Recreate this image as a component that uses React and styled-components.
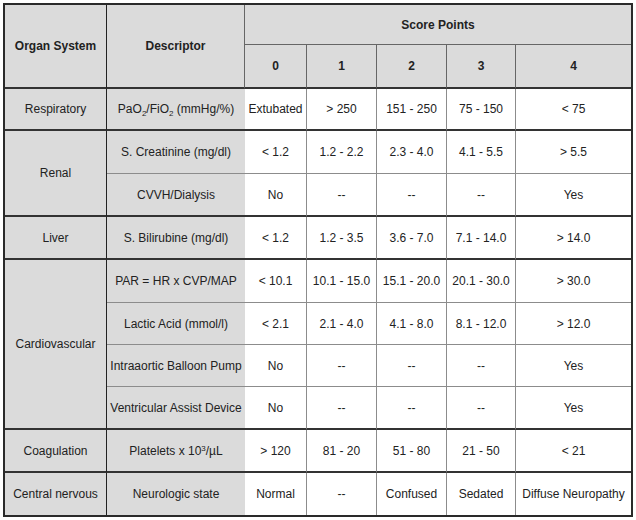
import React from "react";
import styled, { createGlobalStyle } from "styled-components";

const Global = createGlobalStyle`
  html, body { margin: 0; padding: 0; background: #fff; }
  body { font-family: "Liberation Sans", Arial, sans-serif; }
`;

const Page = styled.div`
  padding: 3px 0 0 3px;
  width: 636px;
  height: 520px;
  box-sizing: border-box;
  background: #fff;
`;

const Grid = styled.div`
  display: inline-grid;
  grid-template-columns: 102px 138px 62px 70px 70px 69px 115px;
  grid-template-rows: 40px 44px 42px 43px 43px 43px 43px 42px 42px 43px 43px 42px;
  border: 2px solid #2a2a2a;
  color: #222;
  font-size: 12px;
`;

const Cell = styled.div`
  box-sizing: border-box;
  display: flex;
  align-items: center;
  justify-content: center;
  text-align: center;
  white-space: nowrap;
  padding: 0 1px;
  background: ${(p) => (p.$shade ? "#dbdbdb" : "#fff")};
  font-weight: ${(p) => (p.$bold ? 700 : 400)};
  grid-row: ${(p) => (p.$rows ? `span ${p.$rows}` : "auto")};
  grid-column: ${(p) => (p.$cols ? `span ${p.$cols}` : "auto")};
  border-right: ${(p) => p.$right || "none"};
  border-bottom: ${(p) => p.$bottom || "none"};
`;

const Text = styled.span`
  display: inline-block;
`;

const Sub = styled.span`
  font-size: 8px;
  position: relative;
  top: 3px;
`;

const Sup = styled.span`
  font-size: 8px;
  position: relative;
  top: -4px;
`;

const DARK = "1px solid #222";
const GROUP = "2px solid #333";
const MID = "1px solid #666";
const LIGHT = "1px solid #8c8c8c";

const groups = [
  {
    organ: "Respiratory",
    rows: [
      {
        desc: (
          <Text>
            PaO<Sub>2</Sub>/FiO<Sub>2</Sub>{" "}(mmHg/%)
          </Text>
        ),
        vals: ["Extubated", "> 250", "151 - 250", "75 - 150", "< 75"],
      },
    ],
  },
  {
    organ: "Renal",
    rows: [
      { desc: "S. Creatinine (mg/dl)", vals: ["< 1.2", "1.2 - 2.2", "2.3 - 4.0", "4.1 - 5.5", "> 5.5"] },
      { desc: "CVVH/Dialysis", vals: ["No", "--", "--", "--", "Yes"] },
    ],
  },
  {
    organ: "Liver",
    rows: [
      { desc: "S. Bilirubine (mg/dl)", vals: ["< 1.2", "1.2 - 3.5", "3.6 - 7.0", "7.1 - 14.0", "> 14.0"] },
    ],
  },
  {
    organ: "Cardiovascular",
    rows: [
      { desc: "PAR = HR x CVP/MAP", vals: ["< 10.1", "10.1 - 15.0", "15.1 - 20.0", "20.1 - 30.0", "> 30.0"] },
      { desc: "Lactic Acid (mmol/l)", vals: ["< 2.1", "2.1 - 4.0", "4.1 - 8.0", "8.1 - 12.0", "> 12.0"] },
      { desc: "Intraaortic Balloon Pump", vals: ["No", "--", "--", "--", "Yes"] },
      { desc: "Ventricular Assist Device", vals: ["No", "--", "--", "--", "Yes"] },
    ],
  },
  {
    organ: "Coagulation",
    rows: [
      {
        desc: (
          <Text>
            Platelets x 10<Sup>3</Sup>/µL
          </Text>
        ),
        vals: ["> 120", "81 - 20", "51 - 80", "21 - 50", "< 21"],
      },
    ],
  },
  {
    organ: "Central nervous",
    rows: [
      { desc: "Neurologic state", vals: ["Normal", "--", "Confused", "Sedated", "Diffuse Neuropathy"] },
    ],
  },
];

export default function App() {
  return (
    <>
      <Global />
      <Page>
        <Grid>
          <Cell $shade $bold $rows={2} $right={DARK} $bottom={GROUP}>
            Organ System
          </Cell>
          <Cell $shade $bold $rows={2} $right={MID} $bottom={GROUP}>
            Descriptor
          </Cell>
          <Cell $shade $bold $cols={5} $bottom={MID}>
            Score Points
          </Cell>
          {["0", "1", "2", "3", "4"].map((n, i) => (
            <Cell key={n} $shade $bold $right={i < 4 ? MID : undefined} $bottom={GROUP}>
              {n}
            </Cell>
          ))}
          {groups.map((g, gi) => {
            const lastGroup = gi === groups.length - 1;
            return g.rows.map((r, ri) => {
              const lastRow = ri === g.rows.length - 1;
              const bottom = lastRow ? (lastGroup ? undefined : GROUP) : LIGHT;
              return (
                <React.Fragment key={`${gi}-${ri}`}>
                  {ri === 0 && (
                    <Cell $shade $rows={g.rows.length} $right={DARK} $bottom={lastGroup ? undefined : GROUP}>
                      {g.organ}
                    </Cell>
                  )}
                  <Cell $shade $bottom={bottom}>
                    {r.desc}
                  </Cell>
                  {r.vals.map((v, vi) => (
                    <Cell key={vi} $right={vi < 4 ? LIGHT : undefined} $bottom={bottom}>
                      {v}
                    </Cell>
                  ))}
                </React.Fragment>
              );
            });
          })}
        </Grid>
      </Page>
    </>
  );
}
